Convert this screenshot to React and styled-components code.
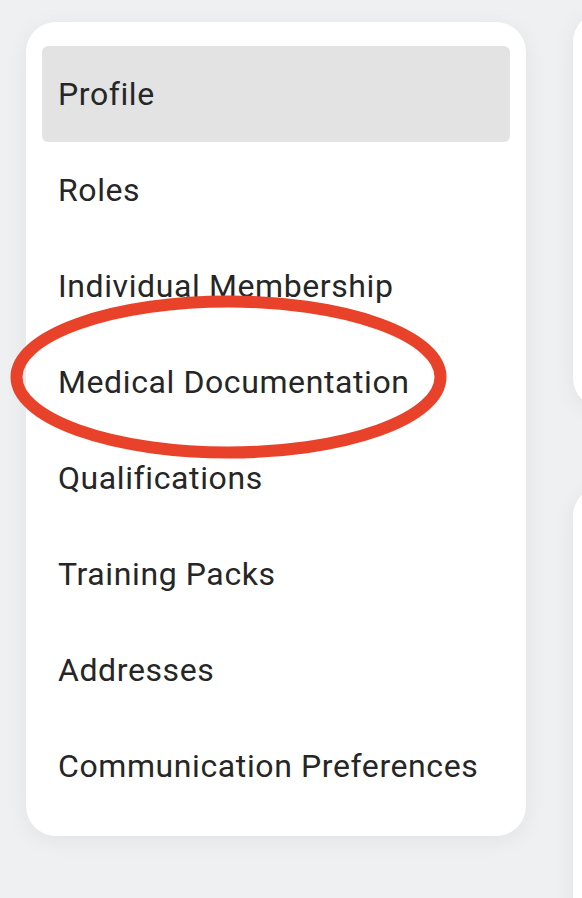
import React from 'react';
import styled, { createGlobalStyle } from 'styled-components';

const items = [
  'Profile',
  'Roles',
  'Individual Membership',
  'Medical Documentation',
  'Qualifications',
  'Training Packs',
  'Addresses',
  'Communication Preferences',
];

const GlobalStyle = createGlobalStyle`
  html, body {
    margin: 0;
    padding: 0;
    background: #eff0f2;
    font-family: Roboto, "Liberation Sans", sans-serif;
    overflow: hidden;
  }
`;

const Page = styled.div`
  position: relative;
  width: 582px;
  height: 898px;
  overflow: hidden;
  display: flex;
  gap: 47px;
  padding: 22px 0 0 26px;
  box-sizing: border-box;
`;

const SideCard = styled.nav`
  flex: 0 0 500px;
  height: 814px;
  box-sizing: border-box;
  padding: 24px 16px 22px;
  background: #fff;
  border-radius: 30px;
  box-shadow: 0 4px 24px rgba(0, 0, 0, 0.06);
  display: flex;
  flex-direction: column;
`;

const MenuItem = styled.div`
  height: 96px;
  flex: 0 0 96px;
  display: flex;
  align-items: center;
  padding-left: 16px;
  border-radius: 6px;
  background: ${props => (props.active ? '#e3e3e3' : 'transparent')};
  color: #262626;
  font-size: 32px;
  letter-spacing: 0.6px;
`;

const RightColumn = styled.div`
  flex: 0 0 300px;
  display: flex;
  flex-direction: column;
  gap: 78px;
  margin-top: -10px;
`;

const Panel = styled.div`
  flex: 0 0 ${props => props.h}px;
  background: #fff;
  border-radius: 30px;
  box-shadow: 0 4px 24px rgba(0, 0, 0, 0.06);
`;

const Mark = styled.svg`
  position: absolute;
  left: 0;
  top: 0;
  pointer-events: none;
`;

export default function App() {
  return (
    <>
      <GlobalStyle />
      <Page>
        <SideCard>
          {items.map((label, i) => (
            <MenuItem key={label} active={i === 0}>
              {label}
            </MenuItem>
          ))}
        </SideCard>
        <RightColumn>
          <Panel h={396} />
          <Panel h={500} />
        </RightColumn>
        <Mark width="582" height="898" viewBox="0 0 582 898">
          <ellipse
            cx="228.5"
            cy="377"
            rx="212"
            ry="75.5"
            fill="none"
            stroke="#e8432a"
            strokeWidth="12"
          />
        </Mark>
      </Page>
    </>
  );
}
